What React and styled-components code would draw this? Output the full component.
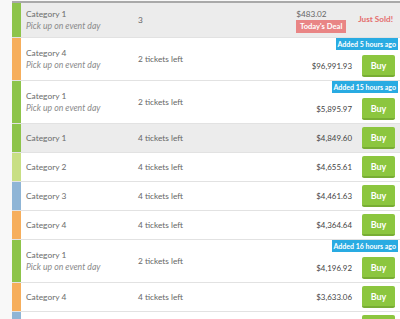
import React from "react";
import styled, { createGlobalStyle } from "styled-components";

const Global = createGlobalStyle`
  html, body { margin: 0; padding: 0; background: #f8f8f8; }
  body { padding: 1px 0 0 12px; font-family: Lato, "Open Sans", sans-serif; overflow: hidden; }
`;

const Table = styled.div`
  border-top: 2px solid #a9a9a9;
  background: #fff;
`;

const Row = styled.div`
  display: flex;
  align-items: stretch;
  background: ${(p) => (p.$shaded ? "#ececec" : "#fff")};
  border-bottom: 1px solid #e2e2e2;
`;

const Bar = styled.div`
  width: 9px;
  flex: none;
  background: ${(p) => p.$color};
`;

const Main = styled.div`
  flex: 1;
  display: grid;
  grid-template-columns: 112px 1fr auto;
  align-items: center;
  padding-left: 5px;
`;

const Info = styled.div`
  display: flex;
  flex-direction: column;
  line-height: 11px;
`;

const Cat = styled.span`
  font-size: 8.4px;
  color: #6b6b6b;
`;

const Pickup = styled.span`
  font-size: 8.7px;
  font-style: italic;
  color: #8a8a8a;
`;

const Tickets = styled.span`
  font-size: 8.3px;
  color: #666;
`;

const Right = styled.div`
  display: flex;
  flex-direction: column;
  align-items: flex-end;
  padding: ${(p) => (p.$badge ? "0" : "3px")} 5px 3px 0;
  align-self: stretch;
  justify-content: flex-end;
`;

const Added = styled.span`
  background: #29abe2;
  color: #fff;
  font-size: 7px;
  font-weight: 700;
  height: 12px;
  line-height: 12px;
  padding: 0 2px;
  margin-right: -3px;
  margin-bottom: 5px;
`;

const Action = styled.div`
  display: flex;
  align-items: center;
  gap: 10px;
`;

const Price = styled.span`
  font-size: 7.9px;
  color: #444;
`;

const BuyButton = styled.button`
  width: 33px;
  height: 22px;
  border: none;
  border-bottom: 2px solid #78ad34;
  border-radius: 2px;
  background: #8cc63f;
  color: #fff;
  font-family: inherit;
  font-size: 9px;
  font-weight: 700;
  padding: 0;
`;

const SoldCell = styled.div`
  display: flex;
  align-items: center;
  gap: 12px;
  padding: 5px 7px 4px 0;
`;

const SoldStack = styled.div`
  display: flex;
  flex-direction: column;
  align-items: flex-start;
`;

const SoldPrice = styled.span`
  font-size: 8.2px;
  line-height: 12px;
  color: #666;
`;

const Deal = styled.span`
  background: #e98585;
  color: #fff;
  font-size: 7.6px;
  font-weight: 700;
  height: 13px;
  line-height: 13px;
  width: 50px;
  text-align: center;
`;

const JustSold = styled.span`
  font-size: 8.2px;
  font-weight: 700;
  color: #e46e6e;
  margin-top: -3px;
`;

const COLORS = {
  1: "#8dc44a",
  2: "#c8df84",
  3: "#8fb5d6",
  4: "#f6ae5c",
};

const rows = [
  { cat: 4, pickup: true, tickets: "2 tickets left", price: "$96,991.93", added: "Added 5 hours ago" },
  { cat: 1, pickup: true, tickets: "2 tickets left", price: "$5,895.97", added: "Added 15 hours ago" },
  { cat: 1, tickets: "4 tickets left", price: "$4,849.60", shaded: true },
  { cat: 2, tickets: "4 tickets left", price: "$4,655.61" },
  { cat: 3, tickets: "4 tickets left", price: "$4,461.63" },
  { cat: 4, tickets: "4 tickets left", price: "$4,364.64" },
  { cat: 1, pickup: true, tickets: "2 tickets left", price: "$4,196.92", added: "Added 16 hours ago" },
  { cat: 4, tickets: "4 tickets left", price: "$3,633.06" },
  { cat: 3, tickets: "4 tickets left", price: "$3,512.40" },
];

export default function App() {
  return (
    <>
      <Global />
      <Table>
        <Row $shaded>
          <Bar $color={COLORS[1]} />
          <Main>
            <Info>
              <Cat>Category 1</Cat>
              <Pickup>Pick up on event day</Pickup>
            </Info>
            <Tickets>3</Tickets>
            <SoldCell>
              <SoldStack>
                <SoldPrice>$483.02</SoldPrice>
                <Deal>Today's Deal</Deal>
              </SoldStack>
              <JustSold>Just Sold!</JustSold>
            </SoldCell>
          </Main>
        </Row>
        {rows.map((r, i) => (
          <Row key={i} $shaded={r.shaded}>
            <Bar $color={COLORS[r.cat]} />
            <Main>
              <Info>
                <Cat>Category {r.cat}</Cat>
                {r.pickup && <Pickup>Pick up on event day</Pickup>}
              </Info>
              <Tickets>{r.tickets}</Tickets>
              <Right $badge={!!r.added}>
                {r.added && <Added>{r.added}</Added>}
                <Action>
                  <Price>{r.price}</Price>
                  <BuyButton>Buy</BuyButton>
                </Action>
              </Right>
            </Main>
          </Row>
        ))}
      </Table>
    </>
  );
}
